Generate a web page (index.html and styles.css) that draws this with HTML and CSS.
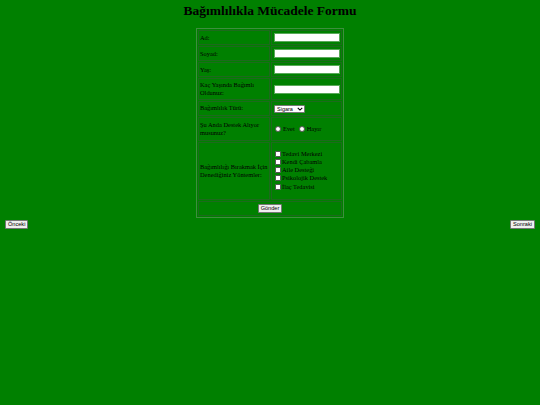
FILE: index.html
```html
<!DOCTYPE html>
<html lang="tr">
<head>
<meta charset="utf-8">
<title>Bağımlılıkla Mücadele Formu</title>
<link rel="stylesheet" href="styles.css">
</head>
<body>
<h1 class="title">Bağımlılıkla Mücadele Formu</h1>
<form class="form">
<table class="grid">
<tr><td class="lbl">Ad:</td><td class="fld"><input class="txt" type="text"></td></tr>
<tr><td class="lbl">Soyad:</td><td class="fld"><input class="txt" type="text"></td></tr>
<tr><td class="lbl">Yaş:</td><td class="fld"><input class="txt" type="text"></td></tr>
<tr><td class="lbl">Kaç Yaşında Bağımlı Oldunuz:</td><td class="fld"><input class="txt" type="text"></td></tr>
<tr><td class="lbl">Bağımlılık Türü:</td><td class="fld"><span class="selwrap"><select class="sel"><option>Sigara</option><option>Alkol</option></select><svg class="arrow" viewBox="0 0 8 5" width="6" height="4"><path d="M1 1 L4 4 L7 1" fill="none" stroke="#000" stroke-width="1.4"/></svg></span></td></tr>
<tr class="tall"><td class="lbl">Şu Anda Destek Alıyor musunuz?</td><td class="fld"><label class="opt"><input class="rad" type="radio" name="d">Evet</label><label class="opt"><input class="rad" type="radio" name="d">Hayır</label></td></tr>
<tr><td class="lbl">Bağımlılığı Bırakmak İçin Denediğiniz Yöntemler:</td><td class="fld checks"><label class="chk"><input class="box" type="checkbox">Tedavi Merkezi</label><label class="chk"><input class="box" type="checkbox">Kendi Çabamla</label><label class="chk"><input class="box" type="checkbox">Aile Desteği</label><label class="chk"><input class="box" type="checkbox">Psikolojik Destek</label><label class="chk"><input class="box" type="checkbox">İlaç Tedavisi</label></td></tr>
<tr><td class="submit" colspan="2"><button class="btn" type="button">Gönder</button></td></tr>
</table>
</form>
<div class="nav">
<button class="btn" type="button">Önceki</button>
<button class="btn" type="button">Sonraki</button>
</div>
</body>
</html>
```
FILE: styles.css
```css
html, body {
  margin: 0;
  background: #008000;
}
body {
  font-family: "Liberation Serif", "Times New Roman", serif;
  font-size: 6.4px;
  color: #000;
}
.title {
  margin: 3px 0 9px;
  font-size: 13.5px;
  line-height: 16px;
  text-align: center;
  font-weight: bold;
}
.form {
  margin: 0;
}
.grid {
  margin: 0 auto;
  width: 148px;
  table-layout: fixed;
  border: 1px solid #3d8f3d;
  border-spacing: 1px;
}
.grid td {
  border: 1px solid #1d6a1d;
  padding: 2px 1px;
  line-height: 8px;
}
.grid .lbl {
  width: 72px;
  box-sizing: border-box;
  padding-left: 1px;
  padding-right: 0;
}
.tall td {
  padding-top: 3px;
  padding-bottom: 3px;
}
.txt {
  display: block;
  width: 66px;
  height: 9px;
  box-sizing: border-box;
  margin: 0 0 0 1px;
  padding: 0;
  border: 1px solid #5aa85a;
  background: #fff;
  font-size: 6px;
}
.selwrap {
  position: relative;
  display: inline-block;
  margin-left: 1px;
  vertical-align: middle;
}
.sel {
  display: block;
  appearance: none;
  -webkit-appearance: none;
  font-family: "Liberation Sans", Arial, sans-serif;
  font-size: 5.5px;
  line-height: 6px;
  height: 8px;
  width: 31px;
  padding: 0 0 0 2px;
  margin: 0;
  border: 1px solid #767676;
  border-radius: 1px;
  background: #fff;
  color: #000;
}
.arrow {
  position: absolute;
  right: 2px;
  top: 2px;
}
.opt {
  white-space: nowrap;
  margin-right: 2px;
}
.rad {
  appearance: none;
  -webkit-appearance: none;
  width: 6px;
  height: 6px;
  box-sizing: border-box;
  border-radius: 50%;
  border: 1px solid #555;
  background: #fff;
  margin: 0 2px 0 2px;
  vertical-align: -1px;
}
.grid td.checks {
  padding-top: 7px;
  padding-bottom: 8px;
}
.chk {
  display: block;
  line-height: 8.3px;
  height: 8.3px;
}
.box {
  appearance: none;
  -webkit-appearance: none;
  width: 6px;
  height: 6px;
  box-sizing: border-box;
  border: 1px solid #555;
  border-radius: 1px;
  background: #fff;
  margin: 0 1px 0 2px;
  vertical-align: -1px;
}
.submit {
  text-align: center;
}
.btn {
  font-family: "Liberation Sans", Arial, sans-serif;
  font-size: 5.6px;
  line-height: 7px;
  padding: 0 2px;
  margin: 0;
  border: 1px solid #767676;
  border-radius: 1px;
  background: #efefef;
  color: #000;
}
.grid .submit {
  padding-top: 2px;
  padding-bottom: 2px;
}
.nav {
  display: flex;
  justify-content: space-between;
  padding: 2px 5px 0;
}
```
